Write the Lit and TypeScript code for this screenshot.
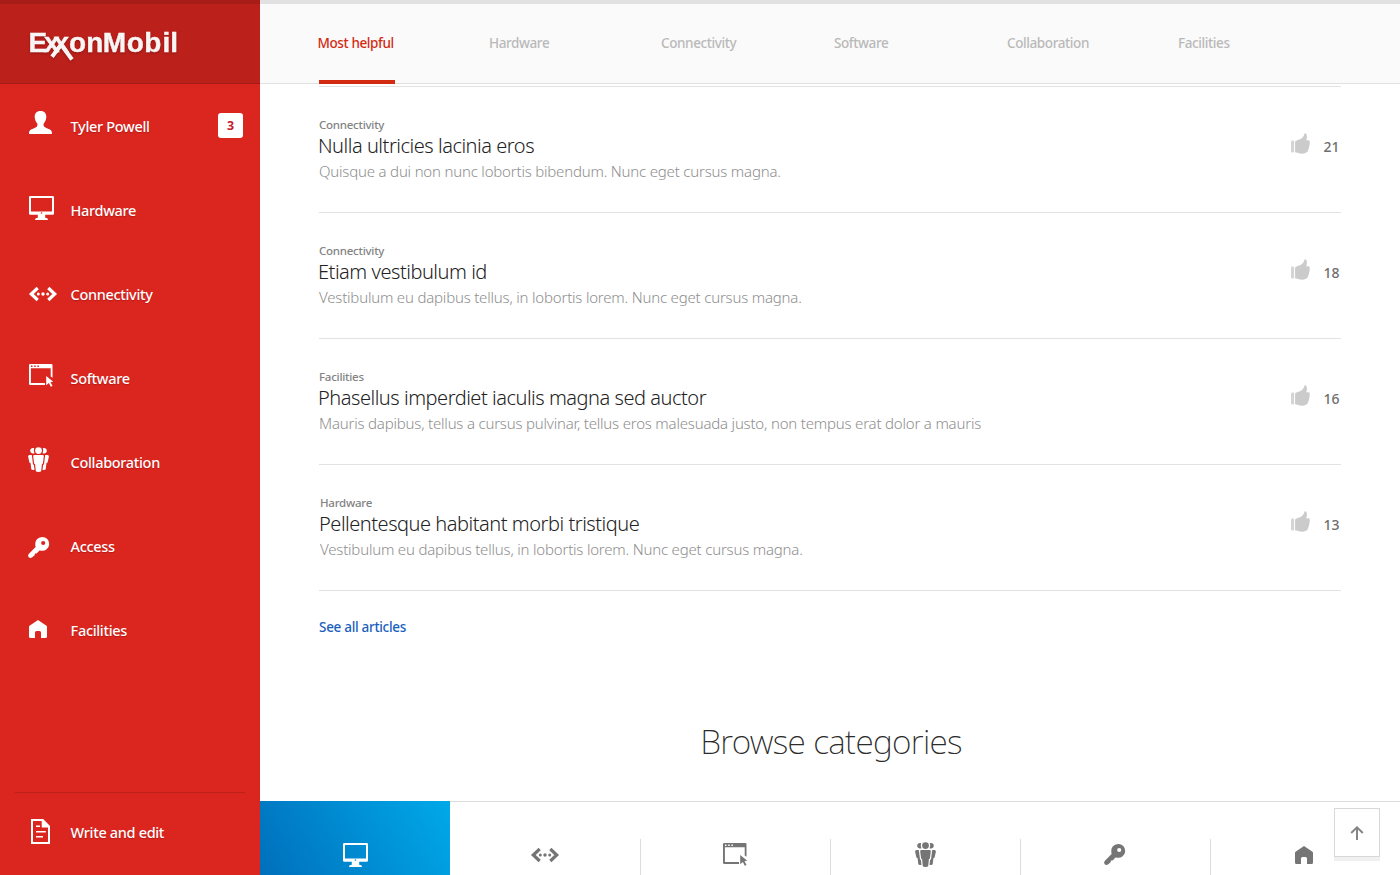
import { LitElement, html, css, svg, nothing } from "lit";
import { customElement, property } from "lit/decorators.js";
import { classMap } from "lit/directives/class-map.js";

type Glyph = { w: number; h: number; art: unknown };

const GLYPHS: Record<string, Glyph> = {
  person: {
    w: 23, h: 23,
    art: svg`<path d="M11.5 0C15.6 0 17.5 2.6 17.3 6.3C17.1 9.4 15.8 11.2 14.6 12.7V14.6C15 16.4 17.4 17 19.6 17.9C22.2 18.9 23 19.8 23 23H0C0 19.8 .8 18.9 3.4 17.9C5.6 17 8 16.4 8.4 14.6V12.7C7.2 11.2 5.9 9.4 5.7 6.3C5.5 2.6 7.4 0 11.5 0Z"/>`,
  },
  monitor: {
    w: 25, h: 24,
    art: svg`<path fill-rule="evenodd" d="M1.3 0H23.7Q25 0 25 1.3V17.5Q25 18.8 23.7 18.8H16.2V21.4Q16.4 22 17.6 22.1Q18.8 22.3 19 24H6Q6.200 22.3 7.400 22.1Q8.600 22 8.800 21.400V18.800H1.300Q0 18.800 0 17.500V1.300Q0 0 1.300 0ZM2 2V15.400H23V2ZM12.500 16.200A.8.8 0 1 0 12.500 17.800A.8.8 0 1 0 12.500 16.200Z"/>`,
  },
  link: {
    w: 28, h: 14,
    art: svg`<path fill="none" stroke="currentColor" stroke-width="3.2" d="M8.700 1L2.300 7L8.700 13M19.300 1L25.700 7L19.300 13"/><circle cx="9.300" cy="7" r="1.500"/><circle cx="14" cy="7" r="1.700"/><circle cx="18.700" cy="7" r="1.500"/>`,
  },
  window: {
    w: 25, h: 23,
    art: svg`<path fill-rule="evenodd" d="M1.200 0H22.300Q23.500 0 23.500 1.200V13.800L21.700 12.400V4.200H1.900V18.900H16V21H1.300Q0 21 0 19.700V1.200Q0 0 1.200 0ZM2 1.500V3H3.500V1.500ZM5.200 1.500V3H6.700V1.500ZM8.400 1.500V3H9.900V1.500Z"/><path d="M17.200 12L24.300 17.700L21.500 18.100L23.500 22L21.800 22.800L19.900 18.900L17.200 21.200Z"/>`,
  },
  people: {
    w: 21, h: 25,
    art: svg`<circle cx="10.500" cy="3.600" r="3.400"/><path d="M6.200 1.200C3.800.4 2 2 2.200 4C2.400 6 4.300 7 6.500 6.200C5.700 4.400 5.600 2.800 6.200 1.200ZM14.800 1.200C17.200.4 19 2 18.800 4C18.600 6 16.700 7 14.500 6.200C15.300 4.400 15.400 2.800 14.800 1.200Z"/><path d="M6.300 8H14.700Q15.900 8 15.800 9.400L14.900 16.500L13.900 17.200L13.200 24Q12.900 25 10.500 25Q8.100 25 7.800 24L7.100 17.200L6.100 16.500L5.200 9.400Q5.100 8 6.300 8Z"/><path d="M1.500 8H3.800L5 17.300L5.900 18L6.500 22.800Q4.100 23.400 3.300 22.300L2.600 16.200L1.400 15.400L.1 9.500Q0 8 1.500 8ZM19.500 8H17.200L16 17.300L15.100 18L14.500 22.800Q16.900 23.400 17.700 22.300L18.400 16.200L19.600 15.400L20.900 9.500Q21 8 19.500 8Z"/>`,
  },
  key: {
    w: 21, h: 21,
    art: svg`<path fill-rule="evenodd" d="M14.100 0A6.900 6.900 0 1 1 13.200 13.700L11.500 13.500L8.600 16.400L7 16.600L6.600 18.300L4.300 20.300Q2.200 21.600.7 20.300Q-.6 18.600.7 17L7.600 10.100L7.300 8.300A6.900 6.900 0 0 1 14.100 0ZM15.200 3.900A2.100 2.100 0 1 0 15.200 8.100A2.100 2.100 0 1 0 15.200 3.900Z"/>`,
  },
  home: {
    w: 18, h: 18,
    art: svg`<path d="M9 0L17.500 5.700Q18 6.100 18 6.700V16.500Q18 18 16.500 18H12V12.500Q12 11 10.500 11H7.500Q6 11 6 12.500V18H1.500Q0 18 0 16.500V6.700Q0 6.100.5 5.700Z"/>`,
  },
  doc: {
    w: 19, h: 25,
    art: svg`<path fill-rule="evenodd" d="M0 0H12.200L19 7V25H0ZM2 2V23H17V8.600H10.700V2Z"/><path d="M5 6.500H9V8H5ZM5 12H14.800V13.500H5ZM5 17H12V18.500H5Z"/>`,
  },
  thumb: {
    w: 19, h: 21,
    art: svg`<rect x="0" y="7.500" width="3.100" height="12" rx="1.300" opacity="0.8"/><path d="M4.100 9Q4.200 7.700 5.500 7.400C9.500 6.600 12.600 4.800 13.400.8Q13.600 0 14.300.2C16.400 1 16.300 4.600 15.200 7.200H17.600Q19 7.400 18.700 8.900Q18.900 10 18.500 11.500Q18.600 12.800 18 14.300Q17.900 15.700 17.200 16.800Q16.900 19.200 15 19.800C12.500 21.100 9.500 21 7.300 20.100L4.100 19.200Z"/>`,
  },
  up: {
    w: 14, h: 14,
    art: svg`<path fill="none" stroke="currentColor" stroke-width="2" d="M7 14V1.800M1.200 7L7 1.300L12.800 7"/>`,
  },
};

@customElement("ui-icon")
class UiIcon extends LitElement {
  @property() name = "";
  static styles = css`
    :host { display: block; flex: none; line-height: 0; }
    svg { display: block; overflow: visible; fill: currentColor; }
  `;
  render() {
    const g = GLYPHS[this.name];
    return g
      ? html`<svg width=${g.w} height=${g.h} viewBox="0 0 ${g.w} ${g.h}">${g.art}</svg>`
      : nothing;
  }
}

const NAV = [
  { icon: "person", label: "Tyler Powell", badge: 3 },
  { icon: "monitor", label: "Hardware" },
  { icon: "link", label: "Connectivity" },
  { icon: "window", label: "Software" },
  { icon: "people", label: "Collaboration" },
  { icon: "key", label: "Access" },
  { icon: "home", label: "Facilities" },
] as { icon: string; label: string; badge?: number }[];

const TABS = ["Most helpful", "Hardware", "Connectivity", "Software", "Collaboration", "Facilities"];

const ARTICLES = [
  { cat: "Connectivity", title: "Nulla ultricies lacinia eros", text: "Quisque a dui non nunc lobortis bibendum. Nunc eget cursus magna.", likes: 21 },
  { cat: "Connectivity", title: "Etiam vestibulum id", text: "Vestibulum eu dapibus tellus, in lobortis lorem. Nunc eget cursus magna.", likes: 18 },
  { cat: "Facilities", title: "Phasellus imperdiet iaculis magna sed auctor", text: "Mauris dapibus, tellus a cursus pulvinar, tellus eros malesuada justo, non tempus erat dolor a mauris", likes: 16 },
  { cat: "Hardware", title: "Pellentesque habitant morbi tristique", text: "Vestibulum eu dapibus tellus, in lobortis lorem. Nunc eget cursus magna.", likes: 13 },
];

const CATEGORIES = ["monitor", "link", "window", "people", "key", "home"];

@customElement("app-root")
class AppRoot extends LitElement {
  static styles = css`
    :host {
      display: flex;
      position: relative;
      width: 1400px;
      height: 875px;
      overflow: hidden;
      background: #fff;
      font-family: "Noto Sans", "Open Sans", sans-serif;
      color: #2b2b2b;
    }
    * { box-sizing: border-box; }
    .side { width: 260px; flex: none; background: #db251f; color: #fff; display: flex; flex-direction: column; }
    .brand { height: 84px; flex: none; background: #bb201b; border-top: 4px solid #a81c18; border-bottom: 1px solid #a41b18; padding: 21px 0 0 28px; }
    .brand svg { display: block; overflow: visible; filter: drop-shadow(0 1px 1px rgba(70, 0, 0, 0.35)); }
    .brand text { font: 700 28px "Liberation Sans", sans-serif; fill: #f8f5f5; stroke: #f8f5f5; stroke-width: 0.4; }
    .brand .legs { stroke: #f8f5f5; stroke-width: 4; fill: none; }
    .row { height: 84px; flex: none; display: flex; align-items: center; padding-right: 17px; font-size: 14.5px; font-weight: 500; letter-spacing: -0.33px; line-height: 20px; text-shadow: 0 1px 1px rgba(120, 0, 0, 0.35); }
    .slot { width: 41.6px; margin-left: 29px; flex: none; }
    .person { margin-top: -7px; }
    .monitor { margin-top: -4px; }
    .window { margin-top: -5px; }
    .people { margin: -5px 0 0 -1px; }
    .key { margin: 3px 0 0 -1px; }
    .home { margin-top: -2px; }
    .doc { margin: -1px 0 0 2px; }
    .label { flex: 1; white-space: nowrap; }
    .badge { width: 25px; height: 25px; margin-top: -1px; border-radius: 3px; background: #fff; color: #c5202c; font-size: 12.5px; font-weight: 700; line-height: 25px; text-align: center; text-shadow: none; letter-spacing: 0; }
    .foot { margin-top: auto; height: 83px; border-top: 1px solid #bb201b; margin-left: 15px; margin-right: 15px; }
    .foot .row { height: 78px; padding: 0; }
    .foot .slot { margin-left: 14px; }
    .main { flex: 1; min-width: 0; display: flex; flex-direction: column; }
    .tabs { height: 84px; flex: none; display: grid; grid-template-columns: 171px 172px 173px 173px 171px 1fr; padding-left: 58px; background: #fafafa; border-top: 4px solid #e1e1e1; border-bottom: 1px solid #e1e1e1; }
    .tab { width: max-content; height: 80px; line-height: 78px; font-size: 13.5px; font-weight: 500; letter-spacing: -0.4px; color: #b9b9b9; white-space: nowrap; }
    .tab.on { width: 76px; color: #d32a12; border-bottom: 4px solid #d32a12; margin-left: 1px; text-indent: -1.500px; }
    .list { margin: 2px 59px 0; border-top: 1px solid #e2e2e2; flex: none; }
    .item { height: 126px; padding-top: 30px; border-bottom: 1px solid #e2e2e2; display: flex; }
    .copy { flex: 1; min-width: 0; white-space: nowrap; }
    .item:last-child .copy { padding-left: 1px; }
    .cat { font-size: 11.5px; font-weight: 500; letter-spacing: -0.25px; line-height: 16px; color: #838383; }
    .title { font-size: 20px; font-weight: 300; letter-spacing: -0.47px; line-height: 25px; color: #222; margin-left: -1px; }
    .text { font-size: 15px; font-weight: 300; letter-spacing: -0.195px; line-height: 26px; color: #8e8e8e; }
    .likes { width: 50px; flex: none; display: flex; color: #cbcbcb; }
    .likes ui-icon { margin-top: 16px; }
    .num { margin: 20px 0 0 13.500px; font-size: 14px; font-weight: 500; letter-spacing: 0; line-height: 20px; color: #6e6e6e; }
    .all { margin: 26px 0 0 59px; width: max-content; font-size: 13.5px; font-weight: 500; letter-spacing: -0.3px; line-height: 20px; color: #1a5fbd; flex: none; }
    .browse { margin: 81px 0 0; padding-left: 2px; height: 83px; flex: none; text-align: center; font-size: 33.5px; line-height: 46px; font-weight: 240; letter-spacing: -0.7px; color: #2b2b2b; }
    .cells { flex: 1; display: grid; grid-template-columns: repeat(6, 190px); border-top: 1px solid #dcdcdc; }
    .cell { display: flex; justify-content: center; align-items: center; height: 36px; margin-top: 37px; padding: 0 1px 5px 0; color: #757575; border-left: 1px solid #dcdcdc; }
    .cell.first { height: auto; margin-top: -1px; padding: 34px 0 0 1px; border: 0; color: #fff; background: linear-gradient(60deg, #006fbb, #00a9e9); }
    .cell.second { border-color: transparent; padding-right: 2px; }
    .cell.fifth { padding-right: 2px; }
    .cell.last { padding-right: 3px; }
    .top { position: absolute; left: 1334px; top: 808px; width: 46px; height: 49px; background: #fff; border: 1px solid #d8d8d8; box-shadow: 0 4px 0 #f0f0f0; display: flex; justify-content: center; align-items: center; color: #858585; }
  `;

  private navRow(icon: string, label: string, badge?: number) {
    return html`<div class="row">
      <div class="slot"><ui-icon class=${icon} name=${icon}></ui-icon></div>
      <div class="label">${label}</div>
      ${badge ? html`<div class="badge">${badge}</div>` : nothing}
    </div>`;
  }

  render() {
    return html`
      <aside class="side">
        <div class="brand">
          <svg width="152" height="38" viewBox="0 0 152 38">
            <text y="27.3" x="0.6 16 25.6 41 58.200 74.800 98.800 116.200 134.600 142.300">ExxonMobil</text>
            <path class="legs" d="M33 19.500L44 34.500M33 20L24 31.800" />
          </svg>
        </div>
        ${NAV.map((n) => this.navRow(n.icon, n.label, n.badge))}
        <div class="foot">${this.navRow("doc", "Write and edit")}</div>
      </aside>
      <main class="main">
        <nav class="tabs">
          ${TABS.map((t, i) => html`<div class=${classMap({ tab: true, on: i === 0 })}>${t}</div>`)}
        </nav>
        <section class="list">
          ${ARTICLES.map((a) => html`<article class="item">
            <div class="copy">
              <div class="cat">${a.cat}</div>
              <div class="title">${a.title}</div>
              <div class="text">${a.text}</div>
            </div>
            <div class="likes"><ui-icon name="thumb"></ui-icon><div class="num">${a.likes}</div></div>
          </article>`)}
        </section>
        <div class="all">See all articles</div>
        <div class="browse">Browse categories</div>
        <div class="cells">
          ${CATEGORIES.map((c, i) => html`<div class=${classMap({ cell: true, first: i === 0, second: i === 1, fifth: i === 4, last: i === 5 })}>
            <ui-icon name=${c}></ui-icon>
          </div>`)}
        </div>
      </main>
      <div class="top"><ui-icon name="up"></ui-icon></div>
    `;
  }
}
